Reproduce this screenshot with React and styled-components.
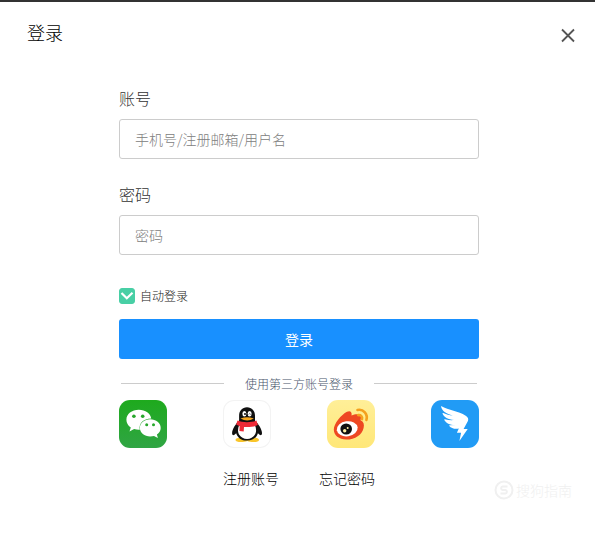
import React from "react";
import styled, { createGlobalStyle } from "styled-components";

const GlobalStyle = createGlobalStyle`
  *, *::before, *::after { box-sizing: border-box; }
  body { margin: 0; background: #fff; }
  body, button, input { font-family: "Noto Sans CJK SC", sans-serif; font-weight: 300; }
`;

const Dialog = styled.main`
  position: relative;
  min-height: 100vh;
  border-top: 2px solid #333;
  background: #fff;
`;

const Header = styled.header`
  display: flex;
  align-items: center;
  justify-content: space-between;
  padding: 16px 18px 0 27px;
`;

const Title = styled.h1`
  margin: 0;
  font-size: 18px;
  line-height: 28px;
  font-weight: 300;
  color: #000;
`;

const CloseButton = styled.button`
  display: flex;
  margin-top: 6px;
  padding: 0;
  border: 0;
  background: none;
  color: #555;
  cursor: pointer;
`;

const Body = styled.div`
  padding: 40px 26px 0 29px;
`;

const Form = styled.form`
  display: flex;
  flex-direction: column;
  width: 100%;
  max-width: 360px;
  margin: 0 auto;
`;

const Field = styled.div`
  display: flex;
  flex-direction: column;
  gap: 9px;
  margin-bottom: 23px;
`;

const Label = styled.label`
  font-size: 16px;
  line-height: 24px;
  color: #333;
`;

const TextInput = styled.input`
  width: 100%;
  height: 40px;
  padding: 0 15px;
  border: 1px solid #ccc;
  border-radius: 3px;
  background: #fff;
  font-size: 14px;
  color: #333;
  outline: none;
  &::placeholder { color: #808080; opacity: 1; }
  &:focus { border-color: #1890ff; }
`;

const Remember = styled.label`
  display: flex;
  align-items: center;
  align-self: flex-start;
  gap: 5px;
  margin: 9px 0 14px;
  font-size: 12px;
  line-height: 18px;
  color: #222;
`;

const CheckHolder = styled.span`
  display: grid;
  > * { grid-area: 1 / 1; }
  svg { pointer-events: none; }
`;

const Checkbox = styled.input`
  appearance: none;
  width: 16px;
  height: 16px;
  margin: 0;
  border: 1px solid #48cfa5;
  border-radius: 3px;
  &:checked { background: #48cfa5; }
  &:not(:checked) + svg { visibility: hidden; }
`;

const SubmitButton = styled.button`
  height: 40px;
  border: 0;
  border-radius: 3px;
  background: #1890ff;
  color: #fff;
  font-size: 14px;
  font-weight: 400;
  cursor: pointer;
`;

const Divider = styled.div`
  display: flex;
  align-items: center;
  gap: 21px;
  margin: 15px 2px 7px;
  font-size: 12px;
  line-height: 19px;
  color: #48556a;
  &::before, &::after {
    content: "";
    flex: 1;
    height: 1px;
    background: #ccc;
  }
`;

const Providers = styled.div`
  display: flex;
  justify-content: space-between;
`;

const ProviderButton = styled.button`
  width: 48px;
  height: 48px;
  padding: 0;
  border: 0;
  border-radius: 11px;
  overflow: hidden;
  background: ${(p) => p.$background};
  box-shadow: ${(p) => (p.$outlined ? "inset 0 0 0 1px #f3f3f3" : "none")};
  cursor: pointer;
  svg { display: block; }
`;

const Links = styled.nav`
  display: flex;
  justify-content: center;
  gap: 40px;
  margin-top: 19px;
`;

const FooterLink = styled.a`
  font-size: 14px;
  line-height: 22px;
  color: #000;
  text-decoration: none;
`;

const Watermark = styled.div`
  position: absolute;
  right: 23px;
  bottom: 34px;
  display: flex;
  align-items: center;
  gap: 2px;
  font-size: 14px;
  line-height: 24px;
  color: #f0f0f0;
`;

const WechatIcon = () => (
  <svg width="48" height="48" viewBox="0 0 48 48" aria-hidden="true">
    <path fill="#fff" d="M19.8 9.8C12.8 9.8 7.4 14 7.4 19.7c0 3.2 1.6 5.8 4.4 7.7l-1.3 4.1 4.6-2.4c1.900.5 3.900.7 5.700.6-1.300-6 3.400-11.200 11.500-11.200-.8-4.900-5.800-8.700-12.500-8.700Z" />
    <path fill="#fff" d="M31.200 19.300c5.900 0 10.500 3.700 10.500 8.600 0 2.700-1.500 5-3.800 6.600l1 3.500-3.900-2.100c-1.100.3-2.400.5-3.800.5-5.800 0-10.300-3.700-10.300-8.500 0-4.900 4.500-8.600 10.300-8.600Z" />
    <g fill="#27a72b">
      <circle cx="14.9" cy="16.200" r="1.800" />
      <circle cx="23.700" cy="16.200" r="1.800" />
      <circle cx="27.700" cy="24.700" r="1.500" />
      <circle cx="34.500" cy="24.700" r="1.500" />
    </g>
  </svg>
);

const QqIcon = () => (
  <svg width="48" height="48" viewBox="0 0 48 48" aria-hidden="true">
    <path fill="#f9c52a" d="M12.500 40c0-2 4-3 8-2.400h7.500c4-.6 8 .4 8 2.400 0 2.600-8.300 2.600-11.700.9-3.500 1.700-11.800 1.700-11.800-.9Z" />
    <path fill="#101010" d="M24 7.300c-4.900 0-7.900 3.600-7.900 8.500v4.700c-3.300 3.500-7 8.500-7 12.600 0 2.700 1.600 2.700 4.100.1 1.400 4.600 5 7.400 10.800 7.400s9.500-2.800 10.900-7.400c2.500 2.600 4.100 2.600 4.100-.1 0-4.100-3.700-9.100-7-12.600v-4.700c0-4.900-3.100-8.500-8-8.500Z" />
    <path fill="#fff" d="M16.300 25h15.500c1.700 3.200 1.800 7.200-.1 10.100-1.500 2.400-4.200 3.900-7.600 3.900s-6.200-1.500-7.700-3.900c-1.900-2.900-1.800-6.900-.1-10.100Z" />
    <ellipse cx="21.400" cy="13.700" rx="2" ry="2.700" fill="#fff" />
    <ellipse cx="26.600" cy="13.700" rx="2" ry="2.700" fill="#fff" />
    <circle cx="22" cy="14" r="1" fill="#101010" />
    <path d="M25.900 14.400q.8-1.600 1.600 0" fill="none" stroke="#101010" strokeWidth=".8" />
    <path fill="#f5a51d" d="M17.500 18.500q6.600-2.700 13.300 0-6.600 4.200-13.300 0Z" />
    <path fill="#ed2a37" d="M14.500 20.500c5.500 2.200 13.400 2.200 19 0l1.300 4.400c-3.800 1.900-9 2.500-13.800 2.100l-.3 4.500-4.300-.5.300-4.800-3.600-1.700Z" />
  </svg>
);

const WeiboIcon = () => (
  <svg width="48" height="48" viewBox="0 0 48 48" aria-hidden="true">
    <path fill="#ee4822" d="M20 11.800c3-1.700 5.400.3 4.500 3.700 4-1.900 8.900-2.100 9.500 1.200.2 1.500-.5 3-.4 3.500 3 1.400 3.900 4.200 3 7.700-1.600 6.700-8.300 11.700-17.300 11.700-7.400 0-12.500-4.300-12.500-10 0-6 7.500-14.900 13.200-17.800Z" />
    <ellipse cx="20.200" cy="28.800" rx="10.500" ry="7.500" transform="rotate(-8 20.200 28.800)" fill="#fff" />
    <ellipse cx="19.200" cy="29" rx="5.800" ry="5.500" fill="#111" />
    <circle cx="17.700" cy="30.700" r="1.700" fill="#fff1a5" />
    <circle cx="20.700" cy="28" r="1" fill="#fff1a5" />
    <g fill="none" stroke="#f4a01d" strokeWidth="2.600" strokeLinecap="round">
      <path d="M30.500 10c6-1.200 10.600 4.200 8.900 9.900" />
      <path d="M31.200 15.100c2.600-.4 4.500 1.700 3.800 4" />
    </g>
  </svg>
);

const DingtalkIcon = () => (
  <svg width="48" height="48" viewBox="0 0 48 48" aria-hidden="true">
    <path fill="#fff" d="M10 6c8 4.200 17.200 5 24.700 9.700 2.900 1.800 3.100 3.800 1.700 6.400L32.600 29h4.100L28.400 41l1.700-8.200h-4.200l1.900-4.200c-4 .8-7.600-.3-9.500-2.600-.3-.4 0-.7.500-.7l6.100-.3c-5.500.3-9.900-1.700-11.600-5-.2-.5.100-.8.600-.7 3.100.8 6 1.100 9.200.8-6-.6-10.300-2.800-11.600-6.600-.1-.5.200-.7.700-.5 3.100 1.300 6.200 2.200 9.500 2.700C15.400 13.500 10.500 11 10 6Z" />
  </svg>
);

const providers = [
  { name: "微信", background: "linear-gradient(#1eaa1d, #30a544)", Icon: WechatIcon },
  { name: "QQ", background: "#fff", outlined: true, Icon: QqIcon },
  { name: "微博", background: "linear-gradient(#ffef98, #ffe778)", Icon: WeiboIcon },
  { name: "钉钉", background: "#219bf5", Icon: DingtalkIcon },
];

export default function App() {
  return (
    <>
      <GlobalStyle />
      <Dialog>
        <Header>
          <Title>登录</Title>
          <CloseButton type="button" aria-label="关闭">
            <svg width="18" height="18" viewBox="0 0 18 18" aria-hidden="true">
              <path d="M3 3.500l12 12M15 3.500l-12 12" stroke="currentColor" strokeWidth="1.800" />
            </svg>
          </CloseButton>
        </Header>
        <Body>
          <Form onSubmit={(e) => e.preventDefault()}>
            <Field>
              <Label htmlFor="account">账号</Label>
              <TextInput id="account" type="text" placeholder="手机号/注册邮箱/用户名" />
            </Field>
            <Field>
              <Label htmlFor="password">密码</Label>
              <TextInput id="password" type="password" placeholder="密码" />
            </Field>
            <Remember>
              <CheckHolder>
                <Checkbox type="checkbox" defaultChecked />
                <svg width="16" height="16" viewBox="0 0 16 16" aria-hidden="true">
                  <path d="M2.500 5l5.300 5.300L13.500 4.800" fill="none" stroke="#fff" strokeWidth="2.200" />
                </svg>
              </CheckHolder>
              自动登录
            </Remember>
            <SubmitButton type="submit">登录</SubmitButton>
            <Divider>使用第三方账号登录</Divider>
            <Providers>
              {providers.map(({ name, background, outlined, Icon }) => (
                <ProviderButton
                  key={name}
                  type="button"
                  aria-label={name}
                  $background={background}
                  $outlined={outlined}
                >
                  <Icon />
                </ProviderButton>
              ))}
            </Providers>
            <Links>
              <FooterLink href="#register">注册账号</FooterLink>
              <FooterLink href="#forgot">忘记密码</FooterLink>
            </Links>
          </Form>
        </Body>
        <Watermark aria-hidden="true">
          <svg width="20" height="20" viewBox="0 0 20 20">
            <circle cx="10" cy="10" r="8.500" fill="none" stroke="currentColor" strokeWidth="2" />
            <path d="M13.500 6.500H8.500a1.800 1.800 0 0 0 0 3.500h3a1.800 1.800 0 0 1 0 3.500H6.500" fill="none" stroke="currentColor" strokeWidth="2" />
          </svg>
          搜狗指南
        </Watermark>
      </Dialog>
    </>
  );
}
